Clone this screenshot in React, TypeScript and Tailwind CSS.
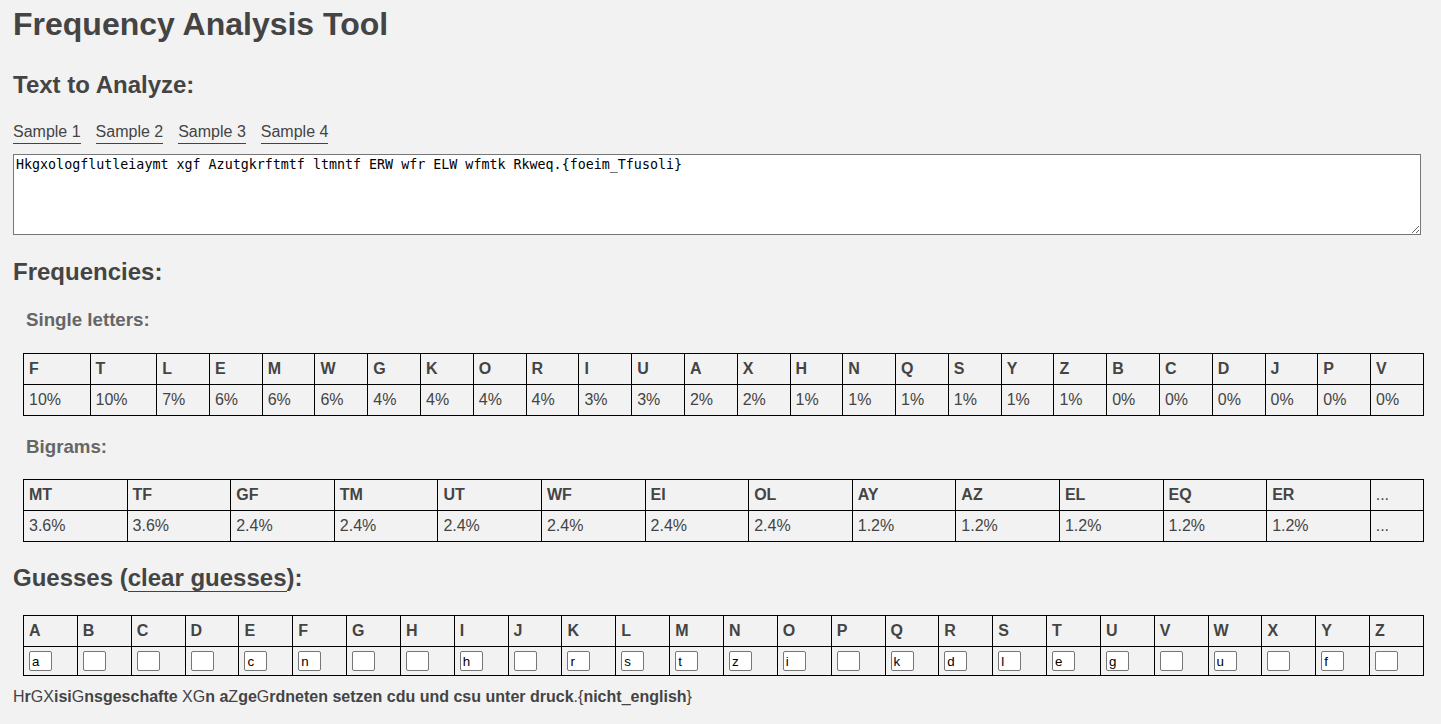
import { Fragment } from 'react'

const cipher =
  'Hkgxologflutleiaymt xgf Azutgkrftmtf ltmntf ERW wfr ELW wfmtk Rkweq.{foeim_Tfusoli}'

const singles: [string, string][] = [
  ['F', '10%'], ['T', '10%'], ['L', '7%'], ['E', '6%'], ['M', '6%'], ['W', '6%'],
  ['G', '4%'], ['K', '4%'], ['O', '4%'], ['R', '4%'], ['I', '3%'], ['U', '3%'],
  ['A', '2%'], ['X', '2%'], ['H', '1%'], ['N', '1%'], ['Q', '1%'], ['S', '1%'],
  ['Y', '1%'], ['Z', '1%'], ['B', '0%'], ['C', '0%'], ['D', '0%'], ['J', '0%'],
  ['P', '0%'], ['V', '0%'],
]

const bigrams: [string, string][] = [
  ['MT', '3.6%'], ['TF', '3.6%'], ['GF', '2.4%'], ['TM', '2.4%'], ['UT', '2.4%'],
  ['WF', '2.4%'], ['EI', '2.4%'], ['OL', '2.4%'], ['AY', '1.2%'], ['AZ', '1.2%'],
  ['EL', '1.2%'], ['EQ', '1.2%'], ['ER', '1.2%'], ['...', '...'],
]

const guesses: Record<string, string> = {
  A: 'a', E: 'c', F: 'n', I: 'h', K: 'r', L: 's', M: 't', N: 'z', O: 'i',
  Q: 'k', R: 'd', S: 'l', T: 'e', U: 'g', W: 'u', Y: 'f',
}

const alphabet = 'ABCDEFGHIJKLMNOPQRSTUVWXYZ'.split('')

function FreqTable({ rows }: { rows: [string, string][] }) {
  return (
    <table className="ml-[10px] w-[1401px] border-collapse">
      <tbody>
        <tr>
          {rows.map(([k]) => (
            <th
              key={k}
              className={
                k === '...'
                  ? 'border border-black px-[5px] py-[6px] text-left font-normal leading-[18px]'
                  : 'border border-black px-[5px] py-[6px] text-left font-bold leading-[18px]'
              }
            >
              {k}
            </th>
          ))}
        </tr>
        <tr>
          {rows.map(([k, v]) => (
            <td key={k} className="border border-black px-[5px] py-[6px] text-left leading-[18px]">
              {v}
            </td>
          ))}
        </tr>
      </tbody>
    </table>
  )
}

function Decoded() {
  return (
    <p className="mt-[12px] text-[16px] leading-[18px]">
      {cipher.split('').map((ch, i) => {
        const g = guesses[ch.toUpperCase()]
        if (g) return <b key={i} className="font-bold">{g}</b>
        return <Fragment key={i}>{ch.toUpperCase()}</Fragment>
      })}
    </p>
  )
}

export default function App() {
  return (
    <div className="min-h-screen bg-[#f2f2f2] px-[13px] pt-[6px] pb-4 font-['Liberation_Sans',Arial,sans-serif] text-[16px] text-[#444]">
      <h1 className="text-[32px] leading-[37px] font-bold">Frequency Analysis Tool</h1>

      <h2 className="mt-[28px] text-[24px] leading-[28px] font-bold">Text to Analyze:</h2>
      <div className="mt-[24px] flex gap-[15px] text-[16px] leading-[18px]">
        {['Sample 1', 'Sample 2', 'Sample 3', 'Sample 4'].map((s) => (
          <a key={s} href="#" className="inline-block border-b border-[#444] pb-[2px] text-[#444]">
            {s}
          </a>
        ))}
      </div>
      <textarea
        className="mt-[10px] block h-[81px] w-[1408px] border border-[#767676] bg-white px-[2px] py-[2px] font-['DejaVu_Sans_Mono',monospace] text-[13.33px] leading-[normal] text-black"
        defaultValue={cipher}
        spellCheck={false}
      />

      <h2 className="mt-[23px] text-[24px] leading-[28px] font-bold">Frequencies:</h2>
      <h3 className="mt-[23px] ml-[13px] text-[18.72px] leading-[22px] font-bold text-[#666]">Single letters:</h3>
      <div className="mt-[22px]">
        <FreqTable rows={singles} />
      </div>
      <h3 className="mt-[20px] ml-[13px] text-[18.72px] leading-[22px] font-bold text-[#666]">Bigrams:</h3>
      <div className="mt-[21px]">
        <FreqTable rows={bigrams} />
      </div>

      <h2 className="mt-[22px] text-[24px] leading-[28px] font-bold">
        Guesses (
        <a href="#" className="border-b border-[#444] text-[#444]">clear guesses</a>
        ):
      </h2>
      <table className="mt-[23px] ml-[10px] w-[1401px] border-collapse">
        <tbody>
          <tr>
            {alphabet.map((l) => (
              <th key={l} className="border border-black px-[5px] py-[6px] text-left font-bold leading-[18px]">
                {l}
              </th>
            ))}
          </tr>
          <tr>
            {alphabet.map((l) => (
              <td key={l} className="border border-black px-[5px] py-[4px]">
                <input
                  type="text"
                  defaultValue={guesses[l] ?? ''}
                  className="block h-[20px] w-[23px] rounded-[2px] border border-[#767676] bg-white px-[2px] font-['Liberation_Sans',Arial,sans-serif] text-[13.33px] text-black"
                />
              </td>
            ))}
          </tr>
        </tbody>
      </table>

      <Decoded />
    </div>
  )
}
